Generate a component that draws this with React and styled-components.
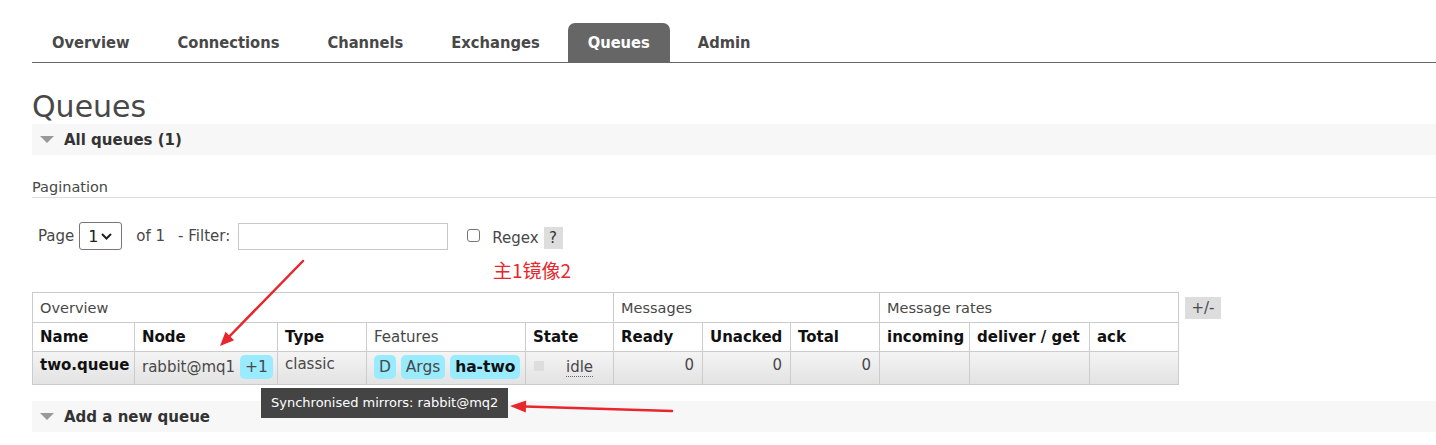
import styled, { createGlobalStyle } from "styled-components";

const GlobalStyle = createGlobalStyle`
    body {
        margin: 0;
        background: #fff;
        font-family: "DejaVu Sans", Verdana, sans-serif;
        font-size: 15px;
        color: #484848;
    }
`;

const tabs = ['Overview', 'Connections', 'Channels', 'Exchanges', 'Queues', 'Admin'];

const App = () => {
    return (
        <PageStyles>
            <GlobalStyle />
            <TabsStyles>
                {tabs.map((t) => (
                    <TabStyles key={t} $active={t === 'Queues'}>{t}</TabStyles>
                ))}
            </TabsStyles>

            <TitleStyles>Queues</TitleStyles>
            <SectionBar>
                <Triangle />
                <span>All queues (1)</span>
            </SectionBar>

            <SubLabel>Pagination</SubLabel>
            <FilterRow>
                <span>Page</span>
                <SelectBox $ml={5}>
                    <span>1</span>
                    <svg width="11" height="7" viewBox="0 0 11 7">
                        <path d="M1 1 L5.5 5.5 L10 1" fill="none" stroke="#222" strokeWidth="2" />
                    </svg>
                </SelectBox>
                <Spaced $ml={14}>of 1</Spaced>
                <Spaced $ml={13}>- Filter:</Spaced>
                <FilterInput $ml={8} />
                <CheckBox $ml={19} />
                <Spaced $ml={12} $mt={4}>Regex</Spaced>
                <HelpBox $ml={5}>?</HelpBox>
            </FilterRow>

            <TableRow>
                <QueueTable>
                    <colgroup>
                        <col style={{ width: 102 }} />
                        <col style={{ width: 143 }} />
                        <col style={{ width: 89 }} />
                        <col style={{ width: 159 }} />
                        <col style={{ width: 88 }} />
                        <col style={{ width: 89 }} />
                        <col style={{ width: 88 }} />
                        <col style={{ width: 89 }} />
                        <col style={{ width: 90 }} />
                        <col style={{ width: 120 }} />
                        <col style={{ width: 89 }} />
                    </colgroup>
                    <thead>
                        <GroupRow>
                            <th colSpan={5}>Overview</th>
                            <th colSpan={3}>Messages</th>
                            <th colSpan={3}>Message rates</th>
                        </GroupRow>
                        <HeadRow>
                            <th>Name</th>
                            <th>Node</th>
                            <th>Type</th>
                            <th className="plain">Features</th>
                            <th>State</th>
                            <th>Ready</th>
                            <th>Unacked</th>
                            <th>Total</th>
                            <th>incoming</th>
                            <th>deliver / get</th>
                            <th>ack</th>
                        </HeadRow>
                    </thead>
                    <tbody>
                        <DataRow>
                            <td className="name">two.queue</td>
                            <td>rabbit@mq1 <Badge>+1</Badge></td>
                            <td className="type">classic</td>
                            <td><Badge>D</Badge> <Badge>Args</Badge> <Badge $bold>ha-two</Badge></td>
                            <td>
                                <StatusSquare />
                                <IdleText>idle</IdleText>
                            </td>
                            <td className="num">0</td>
                            <td className="num">0</td>
                            <td className="num">0</td>
                            <td></td>
                            <td></td>
                            <td></td>
                        </DataRow>
                    </tbody>
                </QueueTable>
                <ToggleButton>+/-</ToggleButton>
            </TableRow>

            <SectionBar $mt={16}>
                <Triangle />
                <span>Add a new queue</span>
            </SectionBar>

            <Tooltip>Synchronised mirrors: rabbit@mq2</Tooltip>
            <Note>主1镜像2</Note>
            <Arrows width="1436" height="445" viewBox="0 0 1436 445">
                <line x1="303" y1="261" x2="229.8" y2="336" stroke="#e8262b" strokeWidth="2.5" strokeLinecap="round" />
                <polygon points="220,346 234.1,340.2 225.5,331.8" fill="#e8262b" />
                <line x1="672" y1="411" x2="525" y2="406.5" stroke="#e8262b" strokeWidth="2.5" strokeLinecap="round" />
                <polygon points="510,406 526.2,400.5 525.8,412.5" fill="#e8262b" />
            </Arrows>
        </PageStyles>
    );
};


const PageStyles = styled.div`
    position: relative;
    padding: 23px 0 0 32px;
    height: 422px;
    overflow: hidden;
`;

const TabsStyles = styled.ul`
    display: flex;
    gap: 8px;
    list-style: none;
    margin: 0;
    padding: 0;
    border-bottom: 1px solid #666;
`;

const TabStyles = styled.li`
    height: 39px;
    line-height: 39px;
    padding: 0 20px;
    border-radius: 7px 7px 0 0;
    font-family: "DejaVu Sans Condensed", "DejaVu Sans", sans-serif;
    font-stretch: condensed;
    font-weight: bold;
    font-size: 16.35px;
    color: ${(p) => (p.$active ? '#fff' : '#484848')};
    background: ${(p) => (p.$active ? '#666' : 'transparent')};
`;

const TitleStyles = styled.h1`
    margin: 27px 0 0;
    height: 34px;
    line-height: 34px;
    font-size: 30px;
    font-weight: normal;
    color: #484848;
`;

const SectionBar = styled.div`
    display: flex;
    align-items: center;
    height: 31px;
    margin-top: ${(p) => p.$mt || 0}px;
    padding-left: 8px;
    background: #f7f7f7;
    font-weight: bold;
    font-size: 15px;
    color: #333;
`;

const Triangle = styled.span`
    width: 0;
    height: 0;
    margin-right: 10px;
    border-left: 7px solid transparent;
    border-right: 7px solid transparent;
    border-top: 7px solid #999;
`;

const SubLabel = styled.div`
    margin-top: 22px;
    line-height: 20px;
    font-size: 14.5px;
    border-bottom: 1px solid #ddd;
`;

const FilterRow = styled.div`
    display: flex;
    align-items: center;
    height: 28px;
    margin-top: 24px;
    padding-left: 6px;
`;

const Spaced = styled.span`
    margin-left: ${(p) => p.$ml || 0}px;
    margin-top: ${(p) => p.$mt || 0}px;
`;

const SelectBox = styled.div`
    display: flex;
    align-items: center;
    justify-content: space-between;
    box-sizing: border-box;
    width: 43px;
    height: 28px;
    margin-left: ${(p) => p.$ml}px;
    padding: 0 9px 0 8px;
    border: 1px solid #767676;
    border-radius: 3px;
    color: #222;
    font-size: 16px;
`;

const FilterInput = styled.div`
    box-sizing: border-box;
    width: 210px;
    height: 27px;
    margin-left: ${(p) => p.$ml}px;
    border: 1px solid #c8c8c8;
`;

const CheckBox = styled.span`
    box-sizing: border-box;
    width: 13px;
    height: 13px;
    margin-left: ${(p) => p.$ml}px;
    margin-top: -2px;
    border: 1px solid #767676;
    border-radius: 3px;
`;

const HelpBox = styled.span`
    display: flex;
    align-items: center;
    justify-content: center;
    width: 19px;
    height: 22px;
    margin-left: ${(p) => p.$ml}px;
    margin-top: 4px;
    background: #ddd;
    font-size: 15px;
    color: #333;
`;

const TableRow = styled.div`
    display: flex;
    align-items: flex-start;
    margin-top: 42px;
`;

const QueueTable = styled.table`
    width: 1146px;
    table-layout: fixed;
    border-collapse: collapse;

    th, td {
        border: 1px solid #ccc;
        padding: 0 7px;
        text-align: left;
        white-space: nowrap;
    }
`;

const GroupRow = styled.tr`
    height: 30px;
    th {
        font-weight: normal;
        font-size: 14.5px;
    }
`;

const HeadRow = styled.tr`
    height: 29px;
    th {
        font-weight: bold;
        color: #111;
        font-size: 15px;
    }
    th.plain {
        font-weight: normal;
        color: #484848;
    }
`;

const DataRow = styled.tr`
    height: 33px;
    background: linear-gradient(#f4f4f4, #e2e2e2);

    td {
        vertical-align: top;
        padding-top: 6px;
        line-height: 19px;
    }
    td.name {
        font-weight: bold;
        color: #111;
        padding-top: 4px;
    }
    td.type {
        padding-top: 3px;
    }
    td.num {
        text-align: right;
        padding-right: 8px;
        padding-top: 4px;
    }
`;

const Badge = styled.span`
    padding: 3px 5px;
    border-radius: 5px;
    background: #99ebff;
    font-size: 15.5px;
    font-weight: ${(p) => (p.$bold ? 'bold' : 'normal')};
    color: ${(p) => (p.$bold ? '#111' : '#484848')};
`;

const StatusSquare = styled.span`
    display: inline-block;
    width: 10px;
    height: 10px;
    margin: 0 22px 0 1px;
    background: #ddd;
    vertical-align: 1px;
`;

const IdleText = styled.abbr`
    text-decoration: none;
    border-bottom: 1px dotted #666;
`;

const ToggleButton = styled.div`
    width: 36px;
    height: 22px;
    line-height: 22px;
    margin: 5px 0 0 6px;
    background: #ddd;
    text-align: center;
    font-size: 15px;
`;

const Tooltip = styled.div`
    position: absolute;
    left: 261px;
    top: 388px;
    height: 30px;
    line-height: 30px;
    padding: 0 10px;
    background: #444;
    color: #fff;
    font-size: 13px;
    white-space: nowrap;
`;

const Note = styled.div`
    position: absolute;
    left: 493px;
    top: 258px;
    font-family: "Noto Sans CJK SC", sans-serif;
    font-size: 19px;
    line-height: 24px;
    color: #e8262b;
`;

const Arrows = styled.svg`
    position: absolute;
    left: 0;
    top: 0;
    pointer-events: none;
`;


export default App;
